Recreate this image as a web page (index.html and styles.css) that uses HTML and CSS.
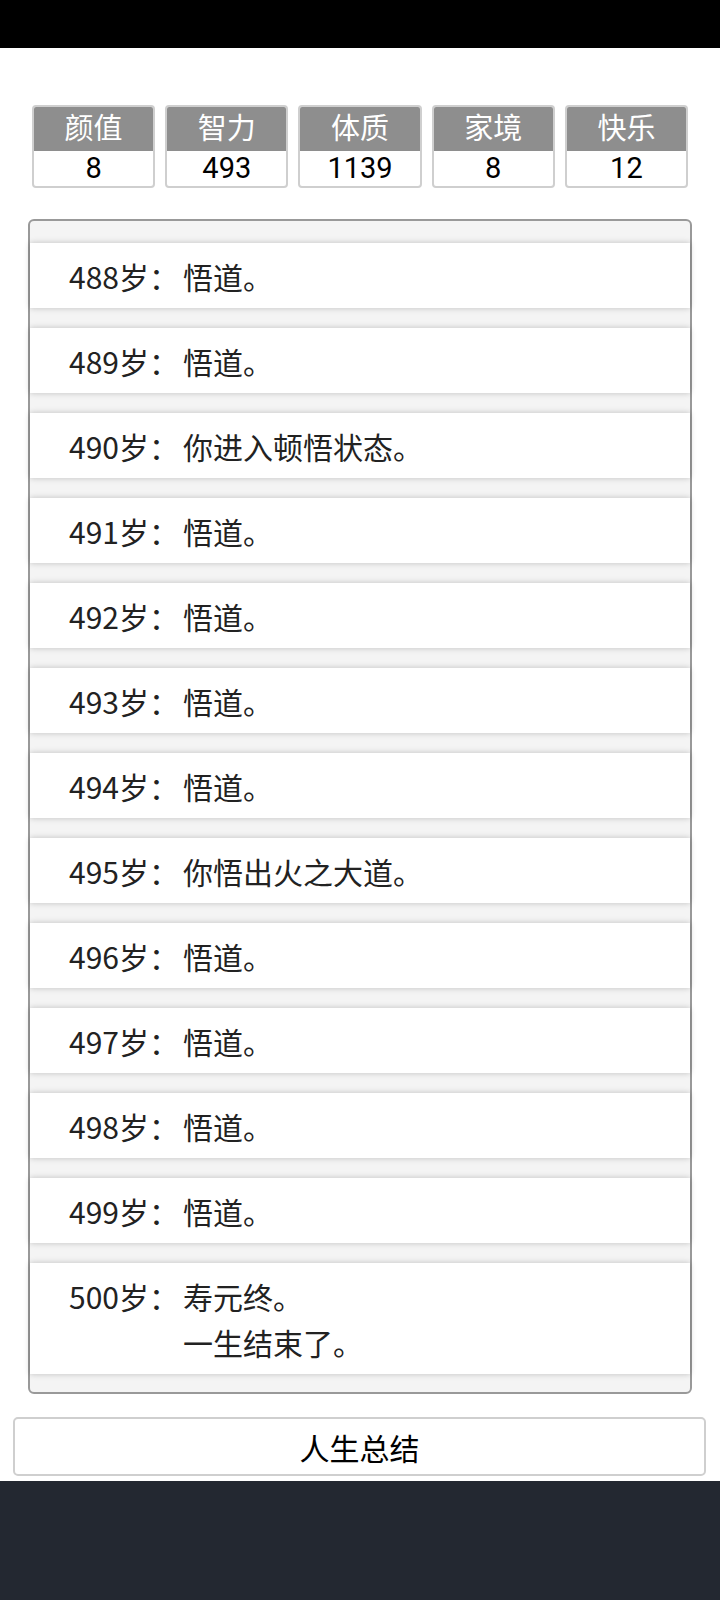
FILE: index.html
```html
<!DOCTYPE html>
<html lang="zh">
<head>
  <meta charset="UTF-8" />
  <meta name="viewport" content="width=device-width, initial-scale=1.0" />
  <title>人生重开模拟器</title>
  <link rel="stylesheet" href="styles.css">
</head>
<body>
  <header class="topbar"></header>

  <main class="page">
    <ul class="stats">
      <li class="stat"><div class="stat-name">颜值</div><div class="stat-value">8</div></li>
      <li class="stat"><div class="stat-name">智力</div><div class="stat-value">493</div></li>
      <li class="stat"><div class="stat-name">体质</div><div class="stat-value">1139</div></li>
      <li class="stat"><div class="stat-name">家境</div><div class="stat-value">8</div></li>
      <li class="stat"><div class="stat-name">快乐</div><div class="stat-value">12</div></li>
    </ul>

    <ul class="lifelog">
      <li><span class="age">488岁：</span><span class="event">悟道。</span></li>
      <li><span class="age">489岁：</span><span class="event">悟道。</span></li>
      <li><span class="age">490岁：</span><span class="event">你进入顿悟状态。</span></li>
      <li><span class="age">491岁：</span><span class="event">悟道。</span></li>
      <li><span class="age">492岁：</span><span class="event">悟道。</span></li>
      <li><span class="age">493岁：</span><span class="event">悟道。</span></li>
      <li><span class="age">494岁：</span><span class="event">悟道。</span></li>
      <li><span class="age">495岁：</span><span class="event">你悟出火之大道。</span></li>
      <li><span class="age">496岁：</span><span class="event">悟道。</span></li>
      <li><span class="age">497岁：</span><span class="event">悟道。</span></li>
      <li><span class="age">498岁：</span><span class="event">悟道。</span></li>
      <li><span class="age">499岁：</span><span class="event">悟道。</span></li>
      <li><span class="age">500岁：</span><span class="event">寿元终。<br>一生结束了。</span></li>
    </ul>

    <button class="summary-button">人生总结</button>
  </main>

  <footer class="navbar-bottom"></footer>
</body>
</html>
```

FILE: styles.css
```css
body {
  margin: 0;
  font-family: "Noto Sans CJK SC", sans-serif;
  background: white;
  color: #222;
}
.topbar {
  height: 48px;
  background: #000;
}
.page {
  padding: 57px 0 5px;
}
.stats {
  display: flex;
  gap: 10px;
  list-style: none;
  margin: 0;
  padding: 0 32px;
}
.stat {
  flex: 1;
  border: 2px solid #cfcfcf;
  border-radius: 4px;
  overflow: hidden;
  text-align: center;
  font-family: Roboto, "Noto Sans CJK SC", sans-serif;
  font-size: 29px;
}
.stat-name {
  background: #8e8e8e;
  color: white;
  height: 44px;
  line-height: 44px;
}
.stat-value {
  color: #000;
  height: 35px;
  line-height: 35px;
}
.lifelog {
  list-style: none;
  margin: 31px 28px 0;
  padding: 22px 0 18px;
  border: 2px solid #999;
  border-radius: 6px;
  background: #f4f4f4;
  display: flex;
  flex-direction: column;
  gap: 20px;
}
.lifelog li {
  display: flex;
  background: white;
  box-shadow: 0 0 6px rgba(0, 0, 0, 0.22);
  padding: 10px 0 9px 39px;
  font-size: 30px;
  line-height: 46px;
  color: #222;
}
.lifelog .age {
  width: 114px;
  flex: none;
}
.summary-button {
  display: block;
  width: 693px;
  height: 59px;
  margin: 23px 0 0 13px;
  background: white;
  border: 2px solid #cfcfcf;
  border-radius: 5px;
  font-family: "Noto Sans CJK SC", sans-serif;
  font-size: 30px;
  color: #000;
  padding: 0;
}
.navbar-bottom {
  height: 121px;
  background: #232831;
}
```
